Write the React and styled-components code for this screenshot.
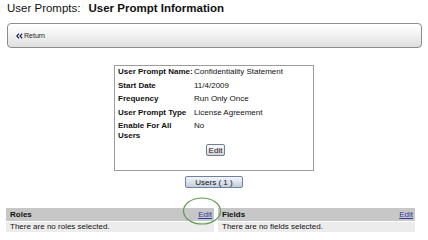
import React from 'react';
import styled, { createGlobalStyle } from 'styled-components';

const GlobalStyle = createGlobalStyle`
  html, body {
    margin: 0;
    padding: 0;
    background: #fff;
  }
  body {
    font-family: "Liberation Sans", Arial, sans-serif;
    color: #111;
  }
`;

const Page = styled.div`
  position: relative;
  width: 428px;
  height: 240px;
  overflow: hidden;
`;

const Title = styled.div`
  height: 16px;
  padding: 1px 0 0 7px;
  font-size: 11.5px;
  line-height: 14px;
  white-space: nowrap;

  b {
    margin-left: 8px;
  }
`;

const ReturnBar = styled.div`
  margin: 6px 6px 0 7px;
  height: 23px;
  border: 1px solid #8c8c8c;
  border-radius: 4px;
  background: linear-gradient(#ffffff, #f3f3f3 45%, #dedede);
  display: flex;
  align-items: center;
  gap: 1px;
  padding-left: 8px;
  font-size: 7px;
  color: #222;
`;

const InfoBox = styled.div`
  width: 195px;
  margin: 17px auto 0;
  border: 1px solid #9c9c9c;
  padding: 1px 0 14px 3px;
  font-size: 8px;
`;

const InfoGrid = styled.div`
  display: grid;
  grid-template-columns: 76px 1fr;
  row-gap: 3.6px;
  line-height: 10px;
`;

const Label = styled.div`
  font-weight: bold;
  max-width: ${({ $narrow }) => ($narrow ? '62px' : 'none')};
`;

const Center = styled.div`
  display: flex;
  justify-content: center;
  margin-top: ${({ $top }) => $top}px;
`;

const SmallButton = styled.button`
  font-family: inherit;
  font-size: 8px;
  line-height: 9px;
  padding: 0 ${({ $pad }) => $pad}px;
  height: ${({ $h }) => $h}px;
  border: 1px solid ${({ $blue }) => ($blue ? '#6f82a3' : '#6d7e99')};
  border-radius: 2px;
  color: #111;
  background: ${({ $blue }) =>
    $blue
      ? 'linear-gradient(#f3f6fb, #d9e0ea 55%, #c3ccd9)'
      : 'linear-gradient(#fafafa, #e9e9e9 55%, #d4d4d4)'};
`;

const Panels = styled.div`
  display: grid;
  grid-template-columns: 208px 197px;
  column-gap: 4px;
  margin: 20px 0 0 6px;
  font-size: 8px;
`;

const Panel = styled.div`
  display: flex;
  flex-direction: column;
`;

const PanelHead = styled.div`
  height: 13px;
  background: #c7c7c7;
  display: flex;
  justify-content: space-between;
  align-items: center;
  padding: 0 2px 0 4px;
  font-weight: bold;
`;

const EditLink = styled.a`
  font-weight: normal;
  color: #2e3a9e;
  text-decoration: underline;
  cursor: pointer;
`;

const PanelRow = styled.div`
  margin-top: 1px;
  height: 10px;
  line-height: 10px;
  background: #ececec;
  padding-left: 4px;
`;

const Highlight = styled.svg`
  position: absolute;
  left: 182px;
  top: 196px;
  pointer-events: none;
`;

const rows = [
  ['User Prompt Name:', 'Confidentiality Statement'],
  ['Start Date', '11/4/2009'],
  ['Frequency', 'Run Only Once'],
  ['User Prompt Type', 'License Agreement'],
  ['Enable For All Users', 'No', true],
];

const Chevrons = () => (
  <svg width="7" height="6" viewBox="0 0 7 6">
    <path d="M3 0.6 L0.9 3 L3 5.4 M6.2 0.6 L4.1 3 L6.2 5.4" fill="none" stroke="#1d2b55" strokeWidth="1.3" />
  </svg>
);

export default function App() {
  return (
    <Page>
      <GlobalStyle />
      <Title>
        User Prompts:<b>User Prompt Information</b>
      </Title>
      <ReturnBar>
        <Chevrons />
        Return
      </ReturnBar>

      <InfoBox>
        <InfoGrid>
          {rows.map(([k, v, narrow]) => (
            <React.Fragment key={k}>
              <Label $narrow={narrow}>{k}</Label>
              <div>{v}</div>
            </React.Fragment>
          ))}
        </InfoGrid>
        <Center $top={3}>
          <SmallButton $pad={2} $h={12}>Edit</SmallButton>
        </Center>
      </InfoBox>

      <Center $top={5}>
        <SmallButton $blue $pad={9} $h={12}>Users ( 1 )</SmallButton>
      </Center>

      <Panels>
        <Panel>
          <PanelHead>
            Roles<EditLink>Edit</EditLink>
          </PanelHead>
          <PanelRow>There are no roles selected.</PanelRow>
        </Panel>
        <Panel>
          <PanelHead>
            Fields<EditLink>Edit</EditLink>
          </PanelHead>
          <PanelRow>There are no fields selected.</PanelRow>
        </Panel>
      </Panels>

      <Highlight width="40" height="30" viewBox="0 0 40 30">
        <ellipse cx="20" cy="15" rx="18.5" ry="13" fill="none" stroke="#5f9d50" strokeWidth="1.2" />
      </Highlight>
    </Page>
  );
}
